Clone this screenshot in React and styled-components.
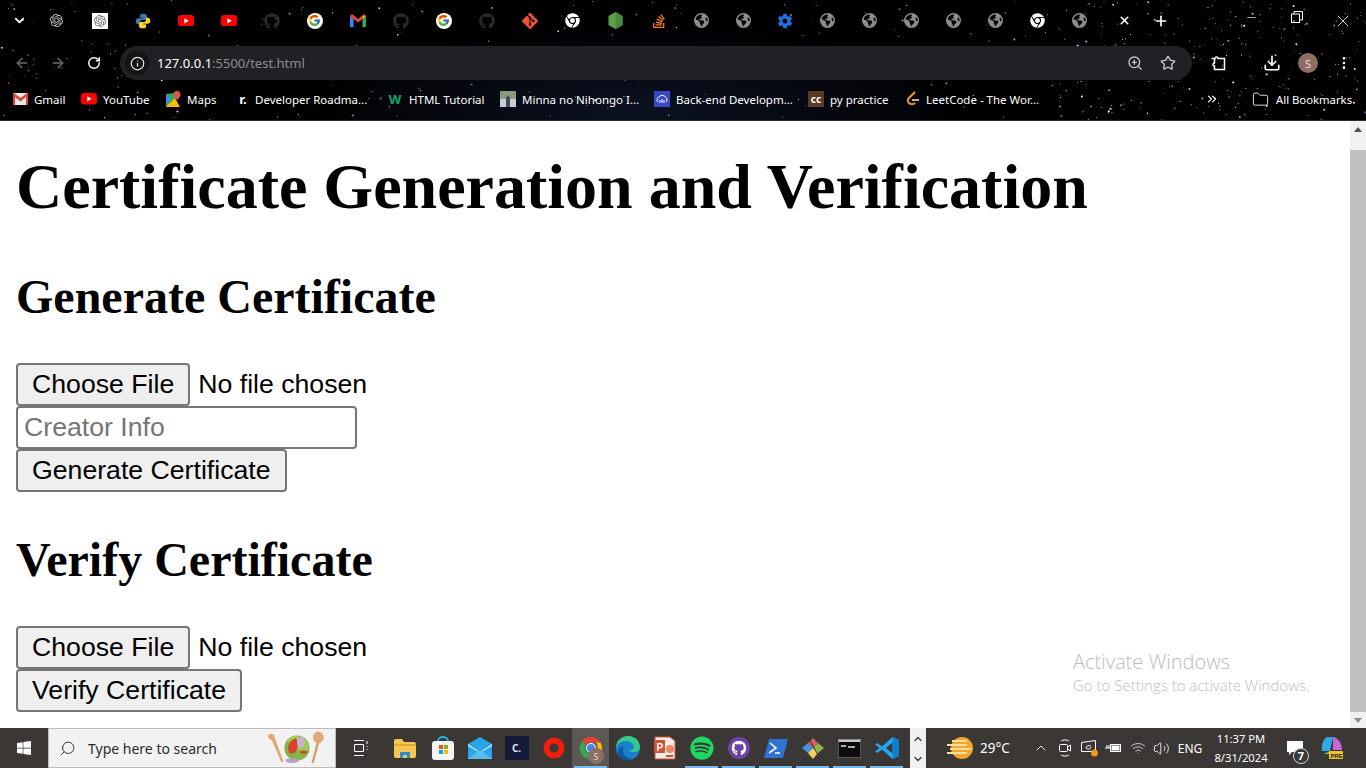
import React from 'react'
import styled, { createGlobalStyle } from 'styled-components'
import { ArrowLeft, ArrowRight, RotateCw, Info, ZoomIn, Star, Download, Minus, X, Plus, ChevronDown, ChevronUp, EllipsisVertical, Folder, ChevronsRight, Search, Wifi, Volume2 } from 'lucide-react'
import { FaGithub, FaChrome, FaStackOverflow, FaSpotify, FaWindows } from 'react-icons/fa'
import { FaEarthAmericas } from 'react-icons/fa6'
import { FcGoogle } from 'react-icons/fc'
import { SiOpenai, SiGit } from 'react-icons/si'
import { IoSettingsSharp } from 'react-icons/io5'

const UI_FONT = '"Noto Sans", "Open Sans", sans-serif'

const GlobalStyle = createGlobalStyle`
  html, body { margin:0; padding:0; height:100%; overflow:hidden; background:#fff; }
  * { box-sizing:border-box; }
`

const Screen = styled.div`
  width:1366px;
  height:768px;
  display:flex;
  flex-direction:column;
  overflow:hidden;
  position:relative;
`

/* browser chrome */
const BrowserBar = styled.header`
  position:relative;
  height:121px;
  flex:none;
  background:radial-gradient(ellipse 340px 90px at 640px 110px, #0c1222 0%, #000 100%);
  color:#fff;
  font-family:${UI_FONT};
  border-bottom:1px solid #2a2a2a;
`
const Stars = styled.svg`
  position:absolute;
  inset:0;
  width:100%;
  height:100%;
`
const TabStrip = styled.div`
  position:relative;
  height:46px;
  display:flex;
  align-items:center;
  padding-bottom:5px;
`
const TabMenu = styled.div`
  width:35px;
  flex:none;
  display:flex;
  justify-content:center;
  padding-left:3px;
`
const Tab = styled.div`
  width:${p => p.$w}px;
  flex:none;
  display:flex;
  justify-content:center;
  align-items:center;
`
const TabClose = styled.div`
  width:49px;
  flex:none;
  display:flex;
  justify-content:center;
`
const NewTab = styled.div`
  width:24px;
  flex:none;
  display:flex;
  justify-content:center;
`
const WindowButtons = styled.div`
  margin-left:auto;
  display:flex;
  width:138px;
  flex:none;
`
const WindowButton = styled.div`
  width:46px;
  display:flex;
  justify-content:center;
`
const Toolbar = styled.div`
  position:relative;
  height:34px;
  display:flex;
  align-items:center;
`
const NavButton = styled.div`
  width:${p => p.$w}px;
  margin-left:${p => p.$gap || 0}px;
  flex:none;
  display:flex;
  justify-content:center;
  align-items:center;
  color:${p => p.$dim ? '#6e6e6e' : '#fff'};
`
const Omnibox = styled.div`
  width:1072px;
  flex:none;
  height:34px;
  margin:0 8px 0 4px;
  background:#202124;
  border-radius:17px;
  display:flex;
  align-items:center;
  padding:0 8px 0 5px;
`
const SecurityChip = styled.div`
  width:24px;
  height:24px;
  border-radius:50%;
  background:#131416;
  display:flex;
  align-items:center;
  justify-content:center;
  color:#e8e8e8;
`
const Url = styled.div`
  margin-left:8px;
  font-size:13px;
  color:#fff;
  flex:1;
  white-space:nowrap;
  span { color:#8b8c8e; }
`
const OmniIcon = styled.div`
  width:33px;
  display:flex;
  justify-content:center;
  color:#c8c8c8;
`
const Avatar = styled.div`
  width:20px;
  height:20px;
  flex:none;
  border-radius:50%;
  background:#8d6e63;
  color:#e8dcd8;
  font-size:11px;
  display:flex;
  align-items:center;
  justify-content:center;
`
const Bookmarks = styled.div`
  position:relative;
  height:39px;
  display:flex;
  align-items:center;
  padding-left:13px;
  font-size:11.5px;
  padding-bottom:1px;
`
const Bookmark = styled.div`
  width:${p => p.$w}px;
  flex:none;
  display:flex;
  align-items:center;
  gap:${p => p.$gap ?? 6}px;
  white-space:nowrap;
  svg { flex:none; }
`
const AllBookmarks = styled.div`
  margin-left:auto;
  width:114px;
  display:flex;
  align-items:center;
  gap:7px;
  white-space:nowrap;
  font-size:11.3px;
`
const Overflow = styled.div`
  position:absolute;
  right:147px;
  display:flex;
`
const Thumb = styled.div`
  width:16px;
  height:16px;
  flex:none;
  background:${p => p.$bg};
  color:${p => p.$fg || '#fff'};
  font-size:${p => p.$size || 10}px;
  font-weight:700;
  display:flex;
  align-items:center;
  justify-content:center;
`
const GoogleBadge = styled.div`
  width:16px;
  height:16px;
  border-radius:50%;
  background:#fff;
  display:flex;
  align-items:center;
  justify-content:center;
`

/* the page itself */
const Viewport = styled.div`
  flex:1;
  display:flex;
  min-height:0;
  background:#fff;
`
const Page = styled.main`
  flex:1;
  padding:0 16px;
  font-family:"Liberation Serif", serif;
  color:#000;
  overflow:hidden;
`
const Title = styled.h1`
  font-size:64px;
  line-height:74px;
  font-weight:700;
  margin:29px 0 0;
`
const SectionTitle = styled.h2`
  font-size:48px;
  line-height:55px;
  font-weight:700;
  margin:${p => p.$top}px 0 39px;
`
const FileRow = styled.div`
  display:flex;
  align-items:center;
  height:43px;
  font-family:"Liberation Sans", sans-serif;
  font-size:26.67px;
`
const NativeButton = styled.button`
  height:43px;
  padding:0 14px;
  font-family:"Liberation Sans", sans-serif;
  font-size:26.67px;
  color:#000;
  background:#efefef;
  border:2px solid #767676;
  border-radius:4px;
  display:block;
`
const FileName = styled.span`
  margin-left:8px;
`
const TextField = styled.input`
  display:block;
  width:341px;
  height:43px;
  padding:0 6px;
  font-family:"Liberation Sans", sans-serif;
  font-size:26.67px;
  background:#fff;
  border:2px solid #767676;
  border-radius:4px;
  &::placeholder { color:#757575; opacity:1; }
`
const Scrollbar = styled.div`
  width:16px;
  flex:none;
  background:#f1f1f1;
  display:flex;
  flex-direction:column;
  align-items:center;
`
const ScrollArrow = styled.div`
  height:16px;
  flex:none;
  display:flex;
  align-items:center;
  justify-content:center;
  &::before {
    content:"";
    border-left:4px solid transparent;
    border-right:4px solid transparent;
    ${p => p.$down ? 'border-top:5px solid #8a8a8a;' : 'border-bottom:5px solid #505050;'}
  }
`
const ScrollTrack = styled.div`
  flex:1;
  width:100%;
  padding:13px 0 0;
  display:flex;
`
const ScrollThumb = styled.div`
  flex:1;
  background:#c1c1c1;
`
const Watermark = styled.div`
  position:absolute;
  left:1073px;
  top:649px;
  font-family:"Open Sans", sans-serif;
  color:#bdbdbd;
  pointer-events:none;
`
const WatermarkTitle = styled.div`
  font-size:20px;
  line-height:26px;
  font-weight:300;
`
const WatermarkText = styled.div`
  font-size:15px;
  line-height:21px;
  font-weight:300;
`

/* windows taskbar */
const Taskbar = styled.footer`
  height:40px;
  flex:none;
  background:#3b3735;
  display:flex;
  align-items:center;
  color:#fff;
  font-family:${UI_FONT};
`
const StartButton = styled.div`
  width:48px;
  flex:none;
  display:flex;
  justify-content:center;
  align-items:center;
`
const SearchBox = styled.div`
  width:288px;
  height:40px;
  flex:none;
  background:#f2f2f2;
  border:1px solid #bdbdbd;
  display:flex;
  align-items:center;
  color:#2b2b2b;
  font-size:14px;
  padding:0 8px 0 10px;
  gap:12px;
`
const SearchGlass = styled(Search)`
  transform:scaleX(-1);
  flex:none;
`
const SearchText = styled.span`
  flex:1;
  white-space:nowrap;
`
const TaskItem = styled.div`
  width:${p => p.$w || 37}px;
  height:40px;
  flex:none;
  display:flex;
  align-items:center;
  justify-content:center;
  position:relative;
  background:${p => p.$active ? '#5c5855' : 'transparent'};
  &::after {
    content:"";
    display:${p => p.$open ? 'block' : 'none'};
    position:absolute;
    left:2px;
    right:2px;
    bottom:0;
    height:2px;
    background:#76b9ed;
  }
`
const AppTile = styled.div`
  width:24px;
  height:24px;
  background:#141a3a;
  color:#dfe3f5;
  font-size:10px;
  font-weight:700;
  display:flex;
  align-items:center;
  justify-content:center;
`
const ProfileBadge = styled(Avatar)`
  position:absolute;
  left:16px;
  top:20px;
  width:16px;
  height:16px;
  font-size:9px;
`
const TrayScroll = styled.div`
  margin-left:5px;
  width:16px;
  height:40px;
  flex:none;
  background:#f0f0f0;
  color:#444;
  display:flex;
  flex-direction:column;
  align-items:center;
  justify-content:space-between;
  padding:5px 0 3px;
`
const Weather = styled.div`
  width:103px;
  flex:none;
  padding-left:21px;
  display:flex;
  align-items:center;
  gap:7px;
  font-size:13.5px;
`
const TrayIcon = styled.div`
  width:${p => p.$w}px;
  flex:none;
  display:flex;
  justify-content:center;
  align-items:center;
  font-size:12px;
  position:relative;
`
const Clock = styled.div`
  width:66px;
  flex:none;
  text-align:center;
  font-size:11.2px;
  line-height:19px;
  white-space:nowrap;
`
const NoticeCount = styled.span`
  position:absolute;
  left:19px;
  top:7px;
  width:16px;
  height:16px;
  border-radius:50%;
  border:1px solid #cfcfcf;
  background:#3b3735;
  font-size:11px;
  font-weight:700;
  display:flex;
  align-items:center;
  justify-content:center;
`

// seeded so the star field is the same on each load
let seed = 7
const rnd = () => {
  seed = (seed * 16807) % 2147483647
  return seed / 2147483647
}
const stars = []
for (let i = 0; i < 1100; i++) {
  const x = rnd() * 1366
  const chance = x > 1050 ? 1 : x < 130 ? 0.35 : 0.18
  if (rnd() > chance) continue
  stars.push({ x, y: rnd() * 120, r: rnd() < 0.2 ? 1 : 0.55, o: 0.35 + rnd() * 0.65, blue: rnd() < 0.4 })
}

const Youtube = ({ w = 16 }) => (
  <svg width={w} height={w * 0.72} viewBox="0 0 16 11.5">
    <rect width="16" height="11.5" rx="3" fill="#f00" />
    <path d="M6.3 3.2l4.4 2.6-4.4 2.6z" fill="#fff" />
  </svg>
)
const Gmail = () => (
  <svg width="15" height="12" viewBox="0 0 15 12">
    <rect width="15" height="12" rx="1" fill="#e8e8e8" />
    <path d="M0 1v11h2V4l5.500 4.400L13 4v8h2V1l-1-1-6.500 5L1 0z" fill="#d9453a" />
  </svg>
)
const GmailTab = () => (
  <svg width="16" height="13" viewBox="0 0 16 13">
    <path d="M0 2v11h3.500V5z" fill="#4285f4" />
    <path d="M16 2v11h-3.500V5z" fill="#34a853" />
    <path d="M0 2l2-2 6 5 6-5 2 2-3.500 3L8 8.500 3.500 5z" fill="#ea4335" />
    <path d="M12.500 3l2-1.500L16 2l-3.500 3z" fill="#fbbc04" />
  </svg>
)
const Maps = () => (
  <svg width="15" height="16" viewBox="0 0 15 16">
    <path d="M0 3l9-1v14H0z" fill="#34a853" />
    <path d="M0 16l9-9 5 9z" fill="#fbbc04" />
    <path d="M0 3l5 5-5 5z" fill="#4285f4" />
    <path d="M11 0a3.500 3.500 0 0 1 3.500 3.500C14.500 6 11 9 11 9S7.500 6 7.500 3.500A3.500 3.500 0 0 1 11 0z" fill="#e0574a" />
  </svg>
)
const Python = () => (
  <svg width="16" height="16" viewBox="0 0 24 24">
    <path d="M12 1C7.500 1 7.500 2.800 7.500 4.500V7H12v1H5C3 8 1 9.500 1 12.500S3 17 5 17h2.500v-3c0-2 1.500-3.500 3.500-3.500h4.500c1.500 0 2.500-1 2.500-2.500V4.500C18 2.500 16 1 12 1z" fill="#3c78aa" />
    <path d="M12 23c4.500 0 4.500-1.800 4.500-3.500V17H12v-1h7c2 0 4-1.500 4-4.500S21 7 19 7h-2.500v3c0 2-1.500 3.500-3.500 3.500H8.500C7 13.500 6 14.500 6 16v3.500C6 21.500 8 23 12 23z" fill="#ffd43b" />
  </svg>
)
const GoogleDot = () => <GoogleBadge><FcGoogle size={13} /></GoogleBadge>
const NodeHex = () => (
  <svg width="15" height="17" viewBox="0 0 15 17"><path d="M7.500 0l7 4v9l-7 4-7-4V4z" fill="#5fa04e" /><path d="M7.500 0l7 4v9l-7 4z" fill="#4a8c3d" /></svg>
)
const ChromeColor = ({ size = 24 }) => (
  <svg width={size} height={size} viewBox="0 0 24 24">
    <path d="M12 1a11 11 0 0 1 9.500 5.500H12a5.500 5.500 0 0 0-5 3L3.200 5A11 11 0 0 1 12 1z" fill="#ea4335" />
    <path d="M21.500 6.500A11 11 0 0 1 12 23l4.700-8.200a5.500 5.500 0 0 0 0-8.300z" fill="#fbbc04" />
    <path d="M3.200 5A11 11 0 0 0 12 23l4.700-8.200A5.500 5.500 0 0 1 7 9.500z" fill="#34a853" />
    <circle cx="12" cy="12" r="5" fill="#fff" />
    <circle cx="12" cy="12" r="4" fill="#4285f4" />
  </svg>
)
const Edge = () => (
  <svg width="24" height="24" viewBox="0 0 24 24">
    <circle cx="12" cy="12" r="12" fill="#1b7fd0" />
    <path d="M12 0c7 0 12 5 12 11.500 0 3-3 4.500-6 4.500-2.500 0-4.500-.8-5-1.800 3 .3 5-1 5-3.200C18 7.500 14 5 10 5 5 5 1.500 8 0 12 0 5 5 0 12 0z" fill="#36c98c" />
    <path d="M7 14c0 5 4 8 8 9-1 .6-2 1-3 1-5 0-9-3-10-7 0-4 3-7 6-7-.7 1-1 2.500-1 4z" fill="#0c59a4" />
  </svg>
)
const Powerpoint = () => (
  <svg width="22" height="24" viewBox="0 0 22 24">
    <path d="M1 1h15l5 4v18H1z" fill="#f4ece6" stroke="#d35230" />
    <rect x="0" y="4" width="11" height="13" fill="#d35230" />
    <text x="2.500" y="14.500" fontSize="10" fontFamily="Liberation Sans, sans-serif" fontWeight="700" fill="#fff">P</text>
    <circle cx="16" cy="13" r="4" fill="#e8876b" />
    <rect x="12" y="19" width="7" height="2" fill="#d35230" />
  </svg>
)
const GithubPurple = () => (
  <svg width="22" height="22" viewBox="0 0 22 22"><circle cx="11" cy="11" r="11" fill="#6f42a8" /><FaGithub x="3.500" y="3.500" size={15} color="#fff" /></svg>
)
const Powershell = () => (
  <svg width="24" height="19" viewBox="0 0 24 19">
    <path d="M5 0h19l-5 19H0z" fill="#2e72d2" />
    <path d="M6 4l6 5-7 5" stroke="#fff" strokeWidth="1.600" fill="none" />
    <path d="M11 14h5" stroke="#fff" strokeWidth="1.600" />
  </svg>
)
const GitGui = () => (
  <svg width="24" height="24" viewBox="0 0 24 24">
    <path d="M7 7l5-5 5 5-5 5z" fill="#d75c5c" />
    <path d="M12 12l5-5 6 5-6 5z" fill="#8bb84a" />
    <path d="M1 12l6-5 5 5-5 5z" fill="#4d8fe0" />
    <path d="M7 17l5-5 5 5-5 6z" fill="#f0d060" />
    <path d="M8 3l9 16" stroke="#3a2a2a" strokeWidth="1" />
  </svg>
)
const Cmd = () => (
  <svg width="23" height="19" viewBox="0 0 23 19">
    <rect width="23" height="19" fill="#0c0c0c" stroke="#9a9a9a" />
    <rect x="0.500" y="0.500" width="22" height="2.500" fill="#c8c8c8" />
    <path d="M3 7h5M10 8h7" stroke="#ddd" strokeWidth="1.300" />
  </svg>
)
const VsCode = () => (
  <svg width="24" height="24" viewBox="0 0 24 24">
    <path d="M17.500 1L24 4v16l-6.500 3L7 13.500 2.500 17 0 15.500 4.500 12 0 8.500 2.500 7 7 10.500z" fill="#23a6f0" />
    <path d="M17.500 6.500L11 12l6.500 5.500z" fill="#3b3735" />
    <path d="M17.500 1L24 4v16l-6.500 3z" fill="#0f7fcc" />
  </svg>
)
const Mail = () => (
  <svg width="24" height="22" viewBox="0 0 24 22">
    <path d="M0 7l12-7 12 7v15H0z" fill="#2aa6e8" />
    <path d="M0 7l12 8 12-8v2l-12 7L0 9z" fill="#b9e6fb" />
    <path d="M0 22l10-8 2 1 2-1 10 8z" fill="#55c0f0" />
  </svg>
)
const FileExplorer = () => (
  <svg width="22" height="19" viewBox="0 0 22 19">
    <path d="M0 2a2 2 0 0 1 2-2h6l2 3h10a2 2 0 0 1 2 2v12a2 2 0 0 1-2 2H2a2 2 0 0 1-2-2z" fill="#f4c54f" />
    <path d="M0 5h22v2H0z" fill="#e0a92f" />
    <path d="M6 19v-6h10v6h-3v-3H9v3z" fill="#2b8fd8" />
  </svg>
)
const StoreBag = () => (
  <svg width="24" height="24" viewBox="0 0 24 24">
    <path d="M7 5a5 4 0 0 1 10 0" stroke="#1eb4e8" strokeWidth="2" fill="none" />
    <rect x="1" y="5" width="22" height="19" rx="3" fill="#f4f4f4" />
    <rect x="8" y="9" width="4" height="4" fill="#f25022" />
    <rect x="13" y="9" width="4" height="4" fill="#7fba00" />
    <rect x="8" y="14" width="4" height="4" fill="#00a4ef" />
    <rect x="13" y="14" width="4" height="4" fill="#ffb900" />
  </svg>
)
const Salad = () => (
  <svg width="62" height="36" viewBox="0 0 64 36">
    <path d="M4 4c3-2 6 0 6 3l9 25-2 1L7 10C4 9 2 6 4 4z" fill="#e0a878" />
    <ellipse cx="55" cy="7" rx="5.500" ry="6" fill="#e0a878" />
    <path d="M53.500 12h2.500l-6 22-2-1z" fill="#d49a68" />
    <circle cx="33" cy="18" r="13" fill="#86b34a" />
    <path d="M22 10l8-5 12 3 4 8-3 6-10-2z" fill="#9ccb57" />
    <path d="M26 24a10 10 0 0 1 6-16 14 14 0 0 1-1 15z" fill="#d9412e" />
    <path d="M36 22a6 6 0 0 1 8 0 5 5 0 0 1-8 0z" fill="#d9412e" />
    <ellipse cx="37" cy="12" rx="4" ry="6" fill="#c9b2cf" />
    <ellipse cx="28" cy="31" rx="7" ry="2.500" fill="#b9a0c2" />
  </svg>
)
const RedRing = () => (
  <svg width="22" height="22" viewBox="0 0 22 22"><circle cx="11" cy="11" r="7.500" fill="none" stroke="#f01e0a" strokeWidth="6" /></svg>
)
const WeatherIcon = () => (
  <svg width="26" height="24" viewBox="0 0 26 24">
    <circle cx="15" cy="12" r="11" fill="#f4a62a" />
    <path d="M0 9h20M3 13h21M0 17h20M5 5h15" stroke="#f9dfa0" strokeWidth="1.800" />
  </svg>
)
const Copilot = () => (
  <svg width="22" height="24" viewBox="0 0 22 24">
    <path d="M6 1h6l-3 14H1c-1-5 1-12 5-14z" fill="#2fa8e8" />
    <path d="M12 1c5 1 9 6 9 13h-9z" fill="#c868d8" />
    <path d="M9 15h12c-1 2-4 3-8 3H3z" fill="#7ed04b" />
    <rect x="8" y="15" width="14" height="8" rx="1" fill="#f2c230" />
    <text x="9.500" y="21.500" fontSize="6" fontWeight="700" fontFamily="Liberation Sans, sans-serif" fill="#222">PRE</text>
  </svg>
)
const Globe = () => <FaEarthAmericas size={15} color="#8c8c8c" />
const DarkGithub = () => <FaGithub size={16} color="#2a2a2a" />

const tabs = [
  <SiOpenai size={13} color="#c8c8c8" />,
  <Thumb $bg="#fff" $fg="#555"><SiOpenai size={12} color="#666" /></Thumb>,
  <Python />,
  <Youtube />,
  <Youtube />,
  <DarkGithub />,
  <GoogleDot />,
  <GmailTab />,
  <DarkGithub />,
  <GoogleDot />,
  <DarkGithub />,
  <SiGit size={16} color="#f05033" />,
  <FaChrome size={15} color="#fff" />,
  <NodeHex />,
  <FaStackOverflow size={16} color="#f48024" />,
  <Globe />,
  <Globe />,
  <IoSettingsSharp size={16} color="#1a73e8" />,
  <Globe />,
  <Globe />,
  <Globe />,
  <Globe />,
  <Globe />,
  <FaChrome size={15} color="#fff" />,
  <Globe />,
]

const bookmarks = [
  { w: 68, label: 'Gmail', icon: <Gmail />, gap: 6 },
  { w: 85, label: 'YouTube', icon: <Youtube />, gap: 6 },
  { w: 69, label: 'Maps', icon: <Maps />, gap: 6 },
  { w: 152, label: 'Developer Roadma...', icon: <Thumb $bg="transparent" $size={13}>r.</Thumb>, gap: 4 },
  { w: 113, label: 'HTML Tutorial', icon: <Thumb $bg="transparent" $fg="#04aa6d" $size={13}>W</Thumb>, gap: 6 },
  { w: 154, label: 'Minna no Nihongo I...', icon: <Thumb $bg="#c9cfd4"><svg width="16" height="16" viewBox="0 0 16 16"><path d="M0 0h16v8H0z" fill="#8a9a80" /><path d="M6 16V7l2-3 2 3v9z" fill="#3f4a5a" /></svg></Thumb>, gap: 6 },
  { w: 154, label: 'Back-end Developm...', icon: <Thumb $bg="#3949c6"><svg width="12" height="10" viewBox="0 0 12 10"><path d="M2 8a3 3 0 0 1 1-5 4 4 0 0 1 7 1 2.500 2.500 0 0 1 0 4M4 9V6M6 9V5M8 9V6" stroke="#fff" fill="none" /></svg></Thumb>, gap: 6 },
  { w: 98, label: 'py practice', icon: <Thumb $bg="#5a3a22">cc</Thumb>, gap: 6 },
  { w: 150, label: 'LeetCode - The Wor...', icon: <svg width="14" height="16" viewBox="0 0 14 16"><path d="M9 1L3 7c-2 2-1 4 0 5s4 2 6 0" stroke="#f89f1b" strokeWidth="1.800" fill="none" /><path d="M6 9h7" stroke="#ddd" strokeWidth="1.600" /></svg>, gap: 6 },
]

const App = () => {
  return (
    <Screen>
      <GlobalStyle />
      <BrowserBar>
        <Stars viewBox="0 0 1366 120">
          {stars.map((s, i) => (
            <circle key={i} cx={s.x} cy={s.y} r={s.r} fill={s.blue ? '#a9c8ff' : '#fff'} opacity={s.o} />
          ))}
        </Stars>
        <TabStrip>
          <TabMenu><ChevronDown size={15} strokeWidth={3} /></TabMenu>
          {tabs.map((icon, i) => <Tab key={i} $w={i < 15 ? 43 : 42}>{icon}</Tab>)}
          <TabClose><X size={13} strokeWidth={3} /></TabClose>
          <NewTab><Plus size={16} strokeWidth={2.5} /></NewTab>
          <WindowButtons>
            <WindowButton><Minus size={13} strokeWidth={1.2} /></WindowButton>
            <WindowButton>
              <svg width="12" height="12" viewBox="0 0 12 12" fill="none" stroke="#fff"><rect x="0.500" y="3" width="8" height="8.500" /><path d="M3 3V.5h8.500V9H9" /></svg>
            </WindowButton>
            <WindowButton><X size={20} strokeWidth={1} /></WindowButton>
          </WindowButtons>
        </TabStrip>
        <Toolbar>
          <NavButton $w={44} $dim><ArrowLeft size={16} /></NavButton>
          <NavButton $w={28} $dim><ArrowRight size={16} /></NavButton>
          <NavButton $w={44}><RotateCw size={14} strokeWidth={2.5} /></NavButton>
          <Omnibox>
            <SecurityChip><Info size={15} /></SecurityChip>
            <Url>127.0.0.1<span>:5500/test.html</span></Url>
            <OmniIcon><ZoomIn size={16} /></OmniIcon>
            <OmniIcon><Star size={16} /></OmniIcon>
          </Omnibox>
          <NavButton $w={36}>
            <svg width="16" height="16" viewBox="0 0 16 16" fill="none" stroke="#fff" strokeWidth="1.500"><path d="M1.500 3.500H5a1.500 1.500 0 0 1 3 0h6.500v11H4.500V11a1.500 1.500 0 0 1 0-3V3.500" /></svg>
          </NavButton>
          <NavButton $w={36} $gap={18}><Download size={18} strokeWidth={2.2} /></NavButton>
          <NavButton $w={36}><Avatar>S</Avatar></NavButton>
          <NavButton $w={36}><EllipsisVertical size={16} /></NavButton>
        </Toolbar>
        <Bookmarks>
          {bookmarks.map(b => (
            <Bookmark key={b.label} $w={b.w} $gap={b.gap}>{b.icon}{b.label}</Bookmark>
          ))}
          <Overflow><ChevronsRight size={14} /></Overflow>
          <AllBookmarks><Folder size={17} strokeWidth={1.2} />All Bookmarks</AllBookmarks>
        </Bookmarks>
      </BrowserBar>

      <Viewport>
        <Page>
          <Title>Certificate Generation and Verification</Title>
          <SectionTitle $top={45}>Generate Certificate</SectionTitle>
          <FileRow>
            <NativeButton>Choose File</NativeButton>
            <FileName>No file chosen</FileName>
          </FileRow>
          <TextField placeholder="Creator Info" />
          <NativeButton>Generate Certificate</NativeButton>
          <SectionTitle $top={40}>Verify Certificate</SectionTitle>
          <FileRow>
            <NativeButton>Choose File</NativeButton>
            <FileName>No file chosen</FileName>
          </FileRow>
          <NativeButton>Verify Certificate</NativeButton>
        </Page>
        <Scrollbar>
          <ScrollArrow />
          <ScrollTrack><ScrollThumb /></ScrollTrack>
          <ScrollArrow $down />
        </Scrollbar>
      </Viewport>

      <Watermark>
        <WatermarkTitle>Activate Windows</WatermarkTitle>
        <WatermarkText>Go to Settings to activate Windows.</WatermarkText>
      </Watermark>

      <Taskbar>
        <StartButton><FaWindows size={16} /></StartButton>
        <SearchBox>
          <SearchGlass size={17} strokeWidth={1.3} />
          <SearchText>Type here to search</SearchText>
          <Salad />
        </SearchBox>
        <TaskItem $w={50}>
          <svg width="16" height="16" viewBox="0 0 16 16" fill="none" stroke="#fff"><path d="M1 .5h10M1 15.500h10M1.500 4.500h9v7h-9zM14 1v3M14 6v1M14 9v1" /></svg>
        </TaskItem>
        <TaskItem $w={38}><FileExplorer /></TaskItem>
        <TaskItem><StoreBag /></TaskItem>
        <TaskItem><Mail /></TaskItem>
        <TaskItem><AppTile>C.</AppTile></TaskItem>
        <TaskItem><RedRing /></TaskItem>
        <TaskItem $active $open>
          <ChromeColor />
          <ProfileBadge>S</ProfileBadge>
        </TaskItem>
        <TaskItem><Edge /></TaskItem>
        <TaskItem><Powerpoint /></TaskItem>
        <TaskItem $open><FaSpotify size={24} color="#1ed760" /></TaskItem>
        <TaskItem $open><GithubPurple /></TaskItem>
        <TaskItem $open><Powershell /></TaskItem>
        <TaskItem $open><GitGui /></TaskItem>
        <TaskItem $open><Cmd /></TaskItem>
        <TaskItem $open><VsCode /></TaskItem>
        <TrayScroll><ChevronUp size={12} strokeWidth={3} /><ChevronDown size={12} strokeWidth={3} /></TrayScroll>
        <Weather><WeatherIcon />29°C</Weather>
        <TrayIcon $w={24}><ChevronUp size={16} strokeWidth={1.3} /></TrayIcon>
        <TrayIcon $w={24}>
          <svg width="14" height="18" viewBox="0 0 14 18" fill="none" stroke="#fff"><path d="M3 2c2-1.500 6-1.500 8 0M3 16c2 1.500 6 1.500 8 0" /><rect x="1.500" y="5.500" width="8" height="7" rx="1" /><path d="M9.500 8l3-2v6l-3-2" /></svg>
        </TrayIcon>
        <TrayIcon $w={23}>
          <svg width="18" height="18" viewBox="0 0 18 18" fill="none" stroke="#fff"><path d="M1.500 3.500l14-2v11h-14zM6 9c0-2 3-3 5-2M11 8c0 2-3 3-5 1" /><circle cx="14.500" cy="14" r="3.500" fill="#f7941d" stroke="none" /></svg>
        </TrayIcon>
        <TrayIcon $w={26}>
          <svg width="16" height="12" viewBox="0 0 16 12" fill="none" stroke="#fff"><rect x="5.500" y="2.500" width="10" height="7" /><rect x="7" y="4" width="7" height="4" fill="#fff" /><path d="M0 6h5M2 3v3M4 3v3" /></svg>
        </TrayIcon>
        <TrayIcon $w={24}><Wifi size={16} strokeWidth={1.3} color="#d8d8d8" /></TrayIcon>
        <TrayIcon $w={22}><Volume2 size={17} strokeWidth={1.2} /></TrayIcon>
        <TrayIcon $w={36}>ENG</TrayIcon>
        <Clock>11:37 PM<br />8/31/2024</Clock>
        <TrayIcon $w={42}>
          <svg width="16" height="15" viewBox="0 0 16 15"><path d="M0 0h16v11H5l-3 3v-3H0z" fill="#fff" /></svg>
          <NoticeCount>7</NoticeCount>
        </TrayIcon>
        <TrayIcon $w={32}><Copilot /></TrayIcon>
      </Taskbar>
    </Screen>
  )
}

export default App
